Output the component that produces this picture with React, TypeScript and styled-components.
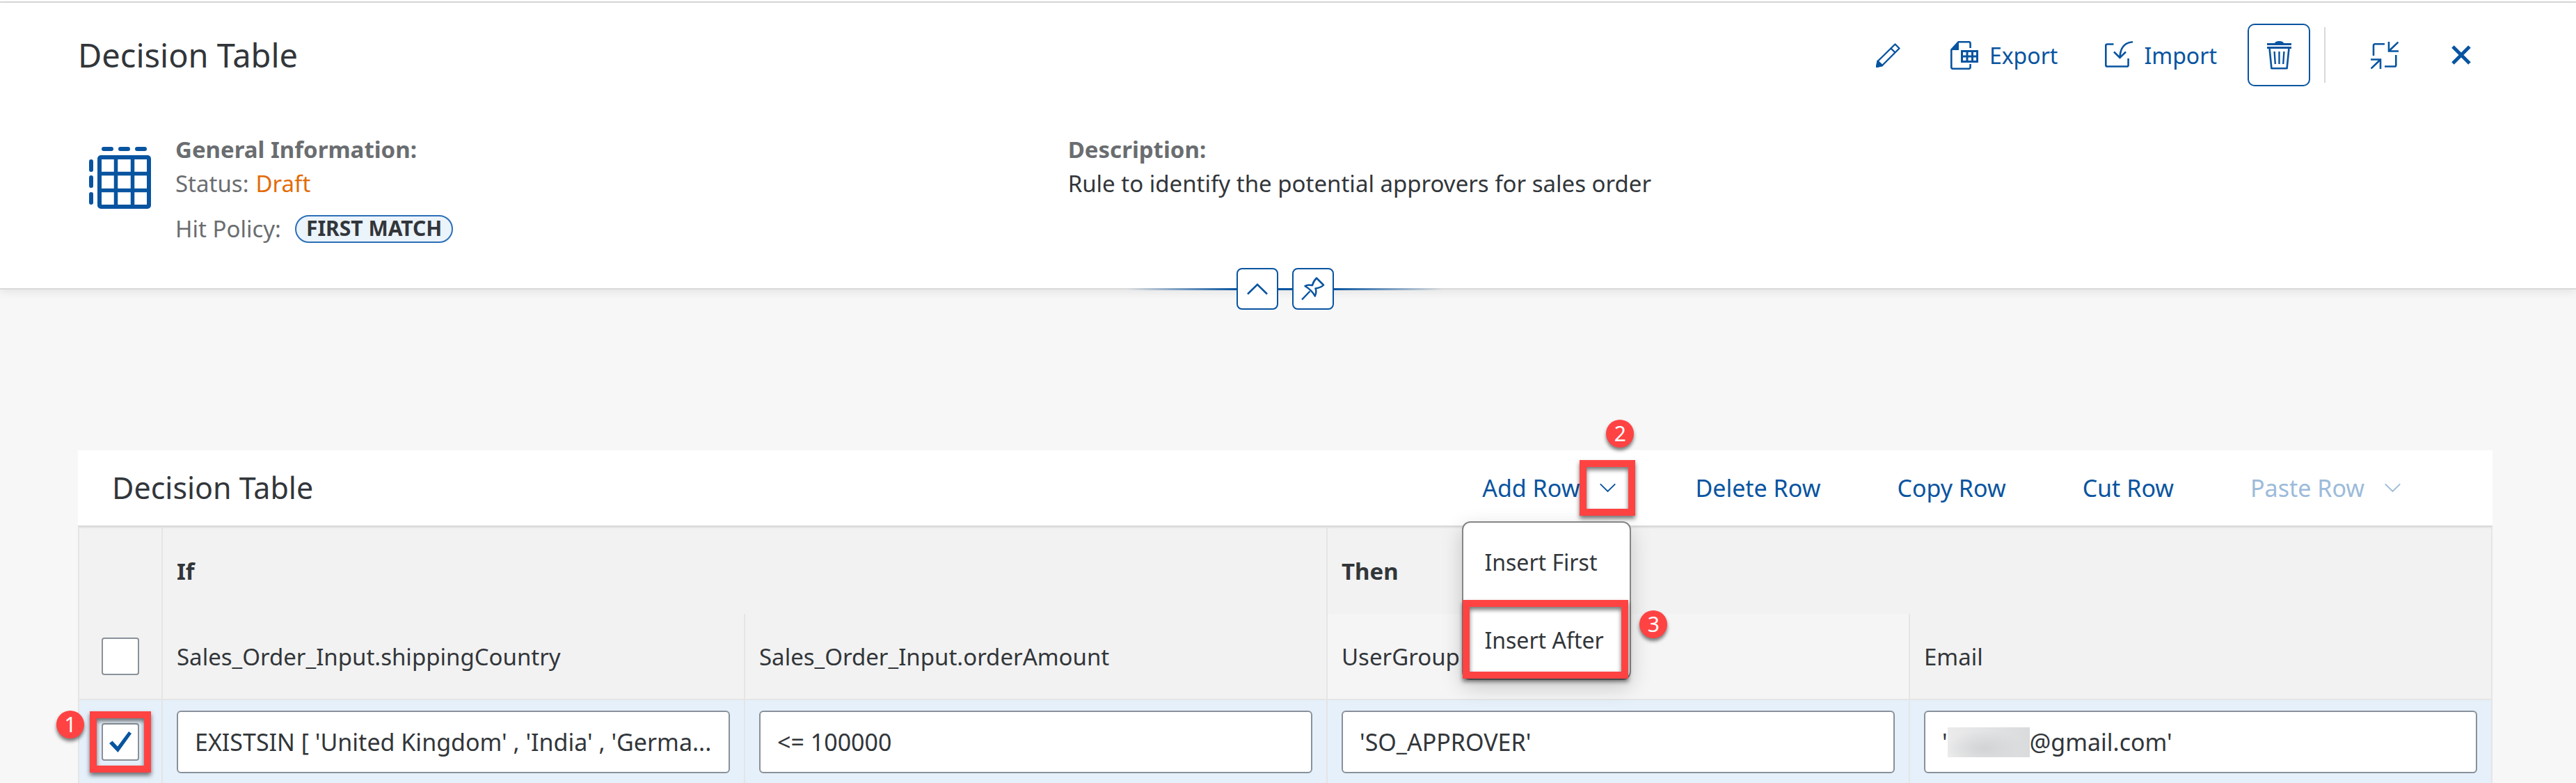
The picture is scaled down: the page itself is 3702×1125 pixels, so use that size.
import React, { useState } from "react";
import styled, { createGlobalStyle, css } from "styled-components";

const color = {
  brand: "#0854a0",
  text: "#32363a",
  label: "#6a6d70",
  critical: "#e26c0a",
  line: "#d9d9d9",
  gridLine: "#e5e5e5",
  page: "#f7f7f7",
  head: "#f2f2f2",
  headHover: "#f5f5f5",
  selected: "#e5f0fa",
  field: "#89919a",
  marker: "#ff4343",
};

const GlobalStyle = createGlobalStyle`
  *, *::before, *::after { box-sizing: border-box; }
  body {
    margin: 0;
    background: ${color.page};
    color: ${color.text};
    font: 33px/49px "Noto Sans", "Open Sans", sans-serif;
  }
  button, input { font: inherit; color: inherit; margin: 0; }
  svg { display: block; flex: none; fill: none; stroke: currentColor; }
`;

const Page = styled.div`
  height: 100vh;
  overflow: hidden;
`;

const Header = styled.header`
  position: relative;
  padding: 30px 120px 61px 112px;
  background: #fff;
  border-bottom: 2px solid ${color.line};
  box-shadow: 0 4px 12px rgba(0, 0, 0, 0.08);
`;

const TopEdge = styled.div`
  height: 4px;
  background: #fff;
  border-bottom: 2px solid ${color.line};
`;

const TitleRow = styled.div`
  display: flex;
  align-items: center;
  justify-content: space-between;
`;

const PageTitle = styled.h1`
  margin: 0;
  font-size: 47px;
  line-height: 60px;
  font-weight: 400;
`;

const Actions = styled.div`
  display: flex;
  align-items: center;
  gap: 20px;
`;

const ActionButton = styled.button<{ $outlined?: boolean; $wide?: boolean }>`
  display: flex;
  align-items: center;
  justify-content: center;
  gap: 16px;
  height: 90px;
  min-width: 90px;
  padding: 0 ${(p) => (p.$wide ? 22 : 0)}px;
  background: transparent;
  border: 2px solid ${(p) => (p.$outlined ? color.brand : "transparent")};
  border-radius: 10px;
  color: ${color.brand};
  font-size: 32px;
`;

const Separator = styled.div`
  width: 2px;
  height: 80px;
  margin-right: 20px;
  background: ${color.line};
`;

const InfoRow = styled.div`
  display: grid;
  grid-template-columns: 41fr 59fr;
  margin-top: 66px;
`;

const InfoGroup = styled.section`
  display: flex;
  gap: 35px;
  padding-left: 16px;
`;

const TableGlyph = styled.div`
  padding-top: 21px;
  color: ${color.brand};
`;

const InfoTitle = styled.h2`
  margin: 0;
  font-size: 33px;
  line-height: 49px;
  font-weight: 700;
  color: ${color.label};
`;

const InfoLine = styled.p<{ $spaced?: boolean }>`
  display: flex;
  align-items: center;
  gap: ${(p) => (p.$spaced ? 20 : 10)}px;
  margin: ${(p) => (p.$spaced ? 16 : 0)}px 0 0;
`;

const Label = styled.span`
  color: ${color.label};
`;

const Draft = styled.span`
  color: ${color.critical};
`;

const Badge = styled.span`
  height: 40px;
  padding: 0 14px;
  border: 2px solid #2b6fb8;
  border-radius: 20px;
  background: #ebf3fb;
  font-size: 30px;
  line-height: 34px;
  font-weight: 700;
`;

const HeaderHandle = styled.div`
  position: absolute;
  left: 112px;
  right: 120px;
  bottom: -31px;
  display: flex;
  align-items: center;
  justify-content: center;
`;

const HandleLine = styled.div<{ $side: "left" | "middle" | "right" }>`
  width: ${(p) => (p.$side === "middle" ? 20 : 156)}px;
  height: 3px;
  background: ${(p) =>
    p.$side === "middle"
      ? color.brand
      : `linear-gradient(to ${p.$side}, ${color.brand}, rgba(8, 84, 160, 0))`};
`;

const HandleButton = styled.button`
  display: flex;
  align-items: center;
  justify-content: center;
  width: 60px;
  height: 60px;
  padding: 0;
  background: #fff;
  border: 2px solid ${color.brand};
  border-radius: 8px;
  color: ${color.brand};
`;

const Panel = styled.section`
  margin: 231px 120px 0 112px;
`;

const Toolbar = styled.div`
  display: flex;
  align-items: center;
  justify-content: space-between;
  height: 110px;
  padding: 0 104px 0 49px;
  background: #fff;
  border-bottom: 2px solid ${color.line};
`;

const PanelTitle = styled.h2`
  margin: 0;
  font-size: 43px;
  line-height: 56px;
  font-weight: 400;
`;

const ToolbarButtons = styled.div`
  display: flex;
  align-items: center;
  gap: 62px;
`;

const Split = styled.div`
  position: relative;
  display: flex;
  align-items: center;
`;

const TextButton = styled.button<{ $joined?: boolean }>`
  height: 80px;
  padding: 0 ${(p) => (p.$joined ? 0 : 24)}px 0 24px;
  border: 0;
  background: transparent;
  color: ${color.brand};
  font-size: 34px;
  &:disabled { color: #9cbbda; }
`;

const ArrowButton = styled.button`
  position: relative;
  display: flex;
  align-items: center;
  justify-content: center;
  width: 80px;
  height: 80px;
  padding: 0;
  border: 0;
  background: transparent;
  color: ${color.brand};
  &:disabled { color: #9cbbda; }
`;

const Menu = styled.div`
  position: absolute;
  z-index: 2;
  top: 88px;
  right: 6px;
  width: 243px;
  background: #fff;
  border: 2px solid #858585;
  border-radius: 12px;
  box-shadow: 0 10px 30px rgba(0, 0, 0, 0.18);
`;

const MenuItem = styled.button`
  position: relative;
  display: block;
  width: 100%;
  height: 112px;
  padding: 0 0 0 30px;
  border: 0;
  background: transparent;
  font-size: 32px;
  text-align: left;
`;

const Highlight = styled.span<{ $inset: string }>`
  position: absolute;
  inset: ${(p) => p.$inset};
  border: 10px solid ${color.marker};
  pointer-events: none;
  filter: drop-shadow(0 4px 3px rgba(0, 0, 0, 0.55));
`;

const Step = styled.span<{ $top: number; $left: number }>`
  position: absolute;
  z-index: 3;
  top: ${(p) => p.$top}px;
  left: ${(p) => p.$left}px;
  width: 40px;
  height: 40px;
  border-radius: 50%;
  background: ${color.marker};
  box-shadow: 0 4px 5px rgba(0, 0, 0, 0.5);
  color: #fff;
  font-size: 30px;
  line-height: 40px;
  text-align: center;
`;

const Grid = styled.table`
  width: 100%;
  table-layout: fixed;
  border-collapse: separate;
  border-spacing: 0;
  border-top: 2px solid ${color.gridLine};
  border-left: 2px solid ${color.gridLine};
`;

const SelectColumn = styled.col`
  width: 120px;
`;

const HeadCell = styled.th<{ $group?: boolean; $hover?: boolean }>`
  height: ${(p) => (p.$group ? 123 : 124)}px;
  padding: 0 20px;
  background: ${(p) => (p.$hover ? color.headHover : color.head)};
  border-right: 2px solid ${color.gridLine};
  border-bottom: ${(p) => (p.$group ? "0" : `2px solid ${color.gridLine}`)};
  font-weight: ${(p) => (p.$group ? 700 : 400)};
  text-align: left;
`;

const Cell = styled.td`
  height: 121px;
  padding: 0 20px;
  background: ${color.selected};
  border-right: 2px solid ${color.gridLine};
  border-bottom: 1px solid ${color.gridLine};
`;

const CheckWrap = styled.label`
  position: relative;
  display: flex;
  align-items: center;
  justify-content: center;
  width: 54px;
  height: 54px;
  margin: 0 auto;
  color: ${color.brand};
  svg { position: absolute; }
`;

const Check = styled.input`
  appearance: none;
  width: 54px;
  height: 54px;
  background: #fff;
  border: 2px solid ${color.field};
  border-radius: 4px;
`;

const fieldBox = css`
  display: block;
  width: 100%;
  height: 90px;
  padding: 0 24px;
  background: #fff;
  border: 2px solid ${color.field};
  border-radius: 6px;
  font-size: 34px;
`;

const Field = styled.input`
  ${fieldBox}
  text-overflow: ellipsis;
`;

const MaskedField = styled.div`
  ${fieldBox}
  display: flex;
  align-items: center;
`;

const Mask = styled.span`
  width: 118px;
  height: 43px;
  background:
    radial-gradient(ellipse at 45% 70%, #d1d3d4 0%, rgba(209, 211, 212, 0) 60%),
    linear-gradient(to right, #ebebec, #e0e1e2 60%, #d9dbdd);
`;

const BareInput = styled.input`
  flex: 1;
  min-width: 0;
  padding: 0;
  border: 0;
  background: transparent;
`;

const PencilIcon = () => (
  <svg width="35" height="35" viewBox="0 0 35 35" strokeWidth="2.4" strokeLinejoin="round">
    <path d="M2.5 26 27.5 1.5 33.5 7.5 9 32 1.5 33.5Z M21.5 7.5l6 6" />
    <path d="M2.5 26 9 32 1 34Z" fill="currentColor" />
  </svg>
);

const ExportIcon = () => (
  <svg width="40" height="41" viewBox="0 0 40 41" strokeWidth="2.6">
    <path d="M12 1.3H26.5Q28.6 1.3 28.6 3.4V10 M1.3 12V37.6Q1.3 39.7 3.4 39.7H26.5Q28.6 39.7 28.6 37.6V33" />
    <path d="M12 0V13H0V12L11 0Z" fill="currentColor" stroke="none" />
    <path d="M16.5 14.5H38.5V29.5H16.5Z M16.5 22H38.5 M24 14.5V29.5 M31.5 14.5V29.5" strokeWidth="3" />
  </svg>
);

const ImportIcon = () => (
  <svg width="40" height="41" viewBox="0 0 40 41" strokeWidth="2.6">
    <path d="M12.5 4.5H3.4Q1.3 4.5 1.3 6.6V34.4Q1.3 36.5 3.4 36.5H31.5Q33.6 36.5 33.6 34.4V25" />
    <path d="M40 1.3Q22.5 2.5 21.5 23 M13 15.5 21.5 24 30 15.5" />
  </svg>
);

const TrashIcon = () => (
  <svg width="35" height="41" viewBox="0 0 35 41">
    <path d="M11 3Q12 0 17.5 0T24 3H35V6H0V3Z M0 8H35V11H0Z" fill="currentColor" stroke="none" />
    <path d="M3.6 11 6.4 39.2H28.6L31.4 11" strokeWidth="2.6" strokeLinejoin="round" />
    <path d="M10.6 15 11.8 33 M17.5 15V33 M24.4 15 23.2 33" strokeWidth="2.4" />
  </svg>
);

const ExitFullscreenIcon = () => (
  <svg width="40" height="39" viewBox="0 0 40 39" strokeWidth="2.6">
    <path d="M4 20V5.4Q4 3.3 6.1 3.3H20 M36.3 19V33.4Q36.3 35.5 34.2 35.5H20" />
    <path d="M39.5.5 26.5 13 M26 0V13.5H40 M.5 38.5 13.5 26 M0 25.5H14V39" />
  </svg>
);

const CloseIcon = () => (
  <svg width="28" height="28" viewBox="0 0 28 28" strokeWidth="5">
    <path d="M2 2 26 26 M26 2 2 26" />
  </svg>
);

const RuleTableIcon = () => (
  <svg width="89" height="89" viewBox="0 0 89 89" strokeLinecap="round">
    <path d="M21 3H32 M45 3H56 M69 3H80 M3 21V33 M3 44V56 M3 68V80" strokeWidth="6" />
    <rect x="15" y="15" width="71" height="71" rx="2" strokeWidth="6" />
    <path d="M38.5 15V86 M62.5 15V86 M15 38.5H86 M15 62.5H86" strokeWidth="5.5" />
  </svg>
);

const ChevronIcon = ({ up, size = 23 }: { up?: boolean; size?: number }) => (
  <svg width={size} height={size / 2 + 2} viewBox="0 0 30 17" strokeWidth={2.6}>
    <path d={up ? "M1 15.5 15 1.8 29 15.5" : "M1 1.5 15 15.2 29 1.5"} />
  </svg>
);

const PinIcon = () => (
  <svg width="34" height="34" viewBox="0 0 34 34" strokeWidth="2.5" strokeLinejoin="round">
    <path d="M22 1.5 32 11.5Q29 15 20.5 16.5Q22.5 21 19.8 27.5Q15.5 19 5.5 13Q9 10.5 16 12Q17.5 6 22 1.5Z M12.5 20.5 1 32.5" />
  </svg>
);

const TickIcon = () => (
  <svg width="32" height="30" viewBox="0 0 32 30">
    <path d="M0 17 4.5 13.5 12 21.5 28 0 32 3 12.5 30Z" fill="currentColor" stroke="none" />
  </svg>
);

const columns = [
  "Sales_Order_Input.shippingCountry",
  "Sales_Order_Input.orderAmount",
  "UserGroup",
  "Email",
];

export default function App() {
  const [all, setAll] = useState(false);
  const [picked, setPicked] = useState(true);

  return (
    <Page>
      <GlobalStyle />
      <TopEdge />
      <Header>
        <TitleRow>
          <PageTitle>Decision Table</PageTitle>
          <Actions>
            <ActionButton aria-label="Edit"><PencilIcon /></ActionButton>
            <ActionButton $wide><ExportIcon />Export</ActionButton>
            <ActionButton $wide><ImportIcon />Import</ActionButton>
            <ActionButton $outlined aria-label="Delete"><TrashIcon /></ActionButton>
            <Separator />
            <ActionButton aria-label="Exit full screen"><ExitFullscreenIcon /></ActionButton>
            <ActionButton aria-label="Close"><CloseIcon /></ActionButton>
          </Actions>
        </TitleRow>
        <InfoRow>
          <InfoGroup>
            <TableGlyph><RuleTableIcon /></TableGlyph>
            <div>
              <InfoTitle>General Information:</InfoTitle>
              <InfoLine><Label>Status:</Label><Draft>Draft</Draft></InfoLine>
              <InfoLine $spaced><Label>Hit Policy:</Label><Badge>FIRST MATCH</Badge></InfoLine>
            </div>
          </InfoGroup>
          <section>
            <InfoTitle>Description:</InfoTitle>
            <InfoLine>Rule to identify the potential approvers for sales order</InfoLine>
          </section>
        </InfoRow>
        <HeaderHandle>
          <HandleLine $side="left" />
          <HandleButton aria-label="Collapse header"><ChevronIcon up size={30} /></HandleButton>
          <HandleLine $side="middle" />
          <HandleButton aria-label="Pin header"><PinIcon /></HandleButton>
          <HandleLine $side="right" />
        </HeaderHandle>
      </Header>

      <Panel>
        <Toolbar>
          <PanelTitle>Decision Table</PanelTitle>
          <ToolbarButtons>
            <Split>
              <TextButton $joined>Add Row</TextButton>
              <ArrowButton aria-label="Add row options">
                <ChevronIcon />
                <Highlight $inset="0" />
                <Step $top={-58} $left={38}>2</Step>
              </ArrowButton>
              <Menu role="menu">
                <MenuItem role="menuitem">Insert First</MenuItem>
                <MenuItem role="menuitem">
                  Insert After
                  <Highlight $inset="-1px 2px 0 -1px" />
                  <Step $top={14} $left={253}>3</Step>
                </MenuItem>
              </Menu>
            </Split>
            <TextButton>Delete Row</TextButton>
            <TextButton>Copy Row</TextButton>
            <TextButton>Cut Row</TextButton>
            <Split>
              <TextButton $joined disabled>Paste Row</TextButton>
              <ArrowButton disabled aria-label="Paste row options"><ChevronIcon /></ArrowButton>
            </Split>
          </ToolbarButtons>
        </Toolbar>
        <Grid>
          <colgroup>
            <SelectColumn />
            {columns.map((name) => <col key={name} />)}
          </colgroup>
          <thead>
            <tr>
              <HeadCell $group />
              <HeadCell $group colSpan={2}>If</HeadCell>
              <HeadCell $group colSpan={2}>Then</HeadCell>
            </tr>
            <tr>
              <HeadCell>
                <CheckWrap>
                  <Check type="checkbox" aria-label="Select all rows" checked={all} onChange={() => setAll(!all)} />
                  {all && <TickIcon />}
                </CheckWrap>
              </HeadCell>
              {columns.map((name) => (
                <HeadCell key={name} $hover={name === "UserGroup"}>{name}</HeadCell>
              ))}
            </tr>
          </thead>
          <tbody>
            <tr>
              <Cell>
                <CheckWrap>
                  <Check type="checkbox" aria-label="Select row" checked={picked} onChange={() => setPicked(!picked)} />
                  {picked && <TickIcon />}
                  <Highlight $inset="-17px" />
                  <Step $top={-18} $left={-65}>1</Step>
                </CheckWrap>
              </Cell>
              <Cell><Field aria-label={columns[0]} defaultValue="EXISTSIN [ 'United Kingdom' , 'India' , 'Germa..." /></Cell>
              <Cell><Field aria-label={columns[1]} defaultValue="<= 100000" /></Cell>
              <Cell><Field aria-label={columns[2]} defaultValue="'SO_APPROVER'" /></Cell>
              <Cell>
                <MaskedField>
                  <span>'</span>
                  <Mask />
                  <BareInput aria-label={columns[3]} defaultValue="@gmail.com'" />
                </MaskedField>
              </Cell>
            </tr>
          </tbody>
        </Grid>
      </Panel>
    </Page>
  );
}
